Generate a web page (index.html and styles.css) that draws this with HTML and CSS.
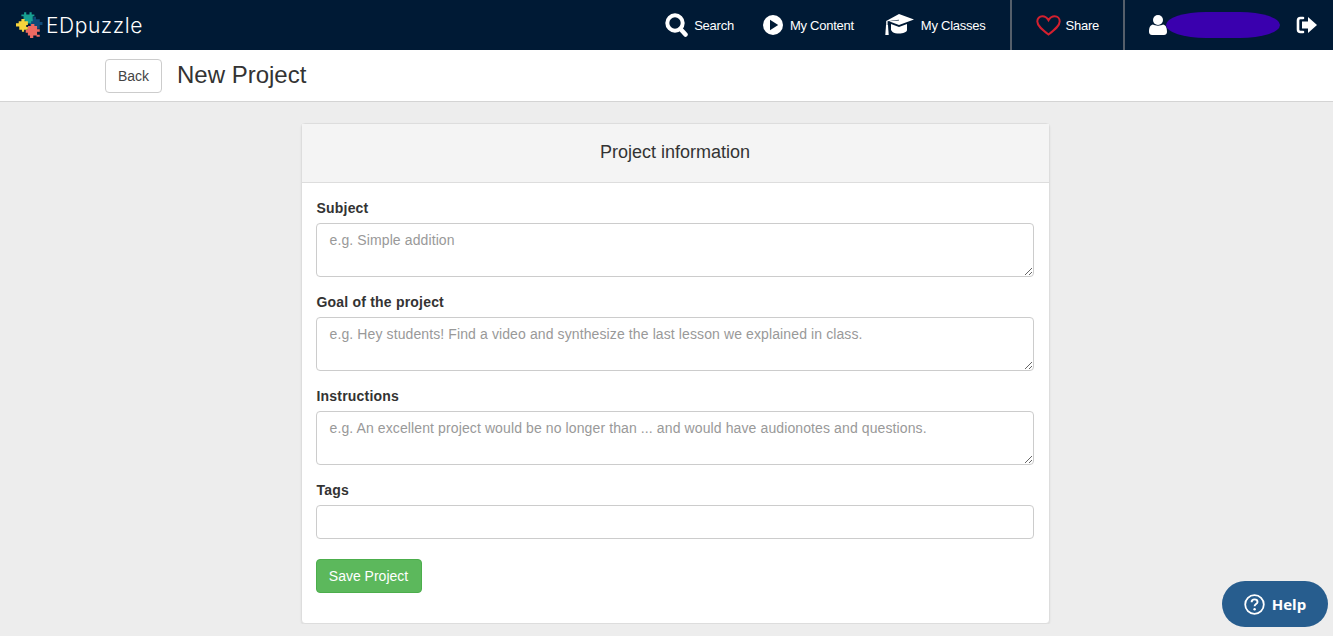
FILE: index.html
```html
<!DOCTYPE html>
<html lang="en">

<head>
    <meta charset="UTF-8">
    <meta name="viewport" content="width=device-width, initial-scale=1.0">
    <title>New Project</title>
    <link rel="stylesheet" href="styles.css">
</head>

<body>
    <nav class="topbar">
        <a class="brand" href="#">
            <svg class="brand-icon" width="27" height="26" viewBox="1 .5 25 27" preserveAspectRatio="none">
                <path fill="#0f4a78" d="M14 8h3V5.500h2.500V8H23v3h2.500v3H23v4h-3v2.500h-3V18h-3z"/>
                <path fill="#17a092" d="M8 5H6V3h2.500V.8h2V3h3V.8h2V3H18v2h-1.500v5H15v2.500H9.500V9H8z"/>
                <path fill="#f6d33c" d="M3.500 10H6V7.800h3V10h3v4h-1.500v2H12v3H8.500v2h-2v-2H4v-3.500H1v-3.200h2.500z"/>
                <path fill="#ef6a62" d="M12 15h3v-2h3v2h2.500v3.500H23v2.500h-2.500v3H23v2.200h-3V25h-3v2.500h-3V25h-2v-3h-2v-3h2z"/>
            </svg>
            <span class="brand-name">EDpuzzle</span>
        </a>

        <div class="nav-right">
            <a class="nav-link nav-search" href="#">
                <svg width="23" height="24" viewBox="0 0 23 24">
                    <circle cx="10" cy="10" r="7.700" fill="none" stroke="#fff" stroke-width="4"/>
                    <path d="M15.500 16l5 5.500" stroke="#fff" stroke-width="4.500" stroke-linecap="round"/>
                </svg>
                Search
            </a>
            <a class="nav-link" href="#">
                <svg width="20" height="20" viewBox="0 0 20 20">
                    <circle cx="10" cy="10" r="10" fill="#fff"/>
                    <path d="M7 4.800l8.200 5.200L7 15.200z" fill="#001a35"/>
                </svg>
                My Content
            </a>
            <a class="nav-link" href="#">
                <svg width="30" height="22" viewBox="0 0 30 22">
                    <path fill="#fff" d="M15 0L30 5.500 15 11 5 7.300 15 6.500 14.800 5.700 3.600 7.300 3.600 11 2.200 11 2.200 7z"/>
                    <path fill="#fff" d="M7 10l8 3 8-3v6c0 2-4 3.500-8 3.500-2.500 0-5-.5-6.500-1.500L7 16z"/>
                    <path fill="#fff" d="M2 11h2l.7 10H1.300z"/>
                </svg>
                My Classes
            </a>
            <div class="nav-section">
                <a class="nav-link" href="#">
                    <svg width="25" height="21" viewBox="0 0 25 21">
                        <path d="M12.500 19.500C6 14.500 1.300 10.800 1.300 6.500 1.300 3.500 3.500 1.300 6.300 1.300c2.700 0 4.800 1.500 6.200 4 1.400-2.500 3.500-4 6.200-4 2.800 0 5 2.200 5 5.200 0 4.300-4.700 8-11.200 13z" fill="none" stroke="#d3202f" stroke-width="2"/>
                    </svg>
                    Share
                </a>
            </div>
            <div class="nav-user">
                <svg width="18" height="20" viewBox="0 0 18 20">
                    <circle cx="9" cy="5" r="5" fill="#fff"/>
                    <path d="M0 17c0-5 1.500-7 4-7.500C6 11 12 11 14 9.500c2.500.5 4 2.500 4 7.500 0 2-1.500 3-3 3H3c-1.500 0-3-1-3-3z" fill="#fff"/>
                </svg>
                <span class="scribble"></span>
                <a class="logout" href="#">
                    <svg width="21" height="18" viewBox="0 0 21 18">
                        <path d="M7 2H4.500C2.800 2 2 3 2 4.500v9C2 15 2.800 16 4.500 16H7" fill="none" stroke="#fff" stroke-width="2.600" stroke-linecap="round"/>
                        <path d="M12 1l9 8-9 8v-4.500H6v-7h6z" fill="#fff"/>
                    </svg>
                </a>
            </div>
        </div>
    </nav>

    <header class="subbar">
        <button class="back-btn">Back</button>
        <h1 class="page-title">New Project</h1>
    </header>

    <main class="content">
        <form class="card">
            <h2 class="card-head">Project information</h2>
            <div class="card-body">
                <label class="field-label">Subject</label>
                <textarea class="field field-area" placeholder="e.g. Simple addition"></textarea>

                <label class="field-label">Goal of the project</label>
                <textarea class="field field-area" placeholder="e.g. Hey students! Find a video and synthesize the last lesson we explained in class."></textarea>

                <label class="field-label">Instructions</label>
                <textarea class="field field-area" placeholder="e.g. An excellent project would be no longer than ... and would have audionotes and questions."></textarea>

                <label class="field-label">Tags</label>
                <input type="text" class="field field-input">

                <button class="save-btn" type="button">Save Project</button>
            </div>
        </form>
    </main>

    <button class="help-btn">
        <svg width="21" height="21" viewBox="0 0 21 21">
            <circle cx="10.500" cy="10.500" r="9.300" fill="none" stroke="#fff" stroke-width="1.800"/>
            <path d="M7.600 8.200c0-1.800 1.300-2.800 3-2.800s2.900 1 2.900 2.500c0 2.200-2.900 2.200-2.900 4.300" fill="none" stroke="#fff" stroke-width="1.900"/>
            <circle cx="10.600" cy="15.200" r="1.200" fill="#fff"/>
        </svg>
        Help
    </button>
</body>

</html>
```

FILE: styles.css
```css
* {
    box-sizing: border-box;
}

body {
    margin: 0;
    background-color: #ededed;
    color: #333;
    font-family: "Liberation Sans", Arial, sans-serif;
    font-size: 14px;
}

a {
    color: inherit;
    text-decoration: none;
}

.topbar {
    display: flex;
    align-items: center;
    justify-content: space-between;
    height: 50px;
    background-color: #001a35;
    color: #fff;
}

.brand {
    display: flex;
    align-items: center;
    gap: 3px;
    padding-left: 16px;
}

.brand-name {
    font-family: Inter, sans-serif;
    font-size: 21px;
    font-weight: 300;
    letter-spacing: 0.55px;
}

.nav-right {
    display: flex;
    align-items: stretch;
    height: 50px;
}

.nav-link {
    display: flex;
    align-items: center;
    gap: 7px;
    margin-right: 30px;
    font-size: 13px;
    letter-spacing: -0.25px;
}

.nav-search {
    gap: 6px;
    margin-right: 29px;
}

.nav-section {
    display: flex;
    margin-left: -6px;
    padding: 0 24px;
    border-left: 2px solid #555f6b;
    border-right: 2px solid #555f6b;
}

.nav-section .nav-link {
    margin-right: 0;
    gap: 5px;
}

.nav-user {
    display: flex;
    align-items: center;
    padding: 0 16px 0 24px;
}

.scribble {
    width: 114px;
    height: 26px;
    margin-left: -1px;
    border-radius: 40px / 13px;
    background-color: #3a00ae;
}

.logout {
    display: flex;
    margin-left: 16px;
}

.subbar {
    display: flex;
    align-items: center;
    gap: 15px;
    height: 52px;
    padding: 1px 0 0 105px;
    background-color: #fff;
    border-bottom: 1px solid #d4d4d4;
}

.back-btn {
    width: 57px;
    height: 34px;
    padding: 0;
    border: 1px solid #ccc;
    border-radius: 4px;
    background-color: #fff;
    color: #444;
    font-family: inherit;
    font-size: 14px;
}

.page-title {
    margin: -2px 0 0;
    font-size: 24px;
    font-weight: 400;
}

.content {
    display: flex;
    justify-content: center;
    padding-top: 21px;
}

.card {
    width: 749px;
    height: 501px;
    margin-left: 17px;
    border: 1px solid #ddd;
    border-radius: 4px;
    background-color: #fff;
    box-shadow: 0 1px 2px rgba(0, 0, 0, 0.08);
}

.card-head {
    margin: 0;
    padding: 18px 0;
    height: 59px;
    border-bottom: 1px solid #ddd;
    background-color: #f4f4f4;
    font-size: 18px;
    font-weight: 400;
    line-height: 20px;
    text-align: center;
}

.card-body {
    display: flex;
    flex-direction: column;
    align-items: flex-start;
    padding: 17px 14px;
}

.field-label {
    height: 17px;
    margin: 0 0 6px 1px;
    font-size: 14px;
    font-weight: 700;
    letter-spacing: 0.2px;
    line-height: 17px;
}

.field {
    display: block;
    width: 718px;
    padding: 6px 12px 6px 13px;
    border: 1px solid #ccc;
    border-radius: 4px;
    background-color: #fff;
    color: #555;
    font-family: inherit;
    font-size: 14px;
    letter-spacing: 0.11px;
    line-height: 20px;
}

.field::placeholder {
    color: #999;
}

.field-area {
    height: 54px;
    margin-bottom: 17px;
}

.field-input {
    height: 34px;
}

.save-btn {
    width: 106px;
    height: 34px;
    margin-top: 20px;
    padding: 0;
    border: 1px solid #4cae4c;
    border-radius: 4px;
    background-color: #5cb85c;
    color: #fff;
    font-family: inherit;
    font-size: 14px;
}

.help-btn {
    position: fixed;
    right: 5px;
    bottom: 9px;
    display: flex;
    align-items: center;
    justify-content: center;
    gap: 7px;
    width: 106px;
    height: 46px;
    padding: 0;
    border: 0;
    border-radius: 23px;
    background-color: #275d8e;
    color: #fff;
    font-family: "Open Sans", sans-serif;
    font-size: 15px;
    font-weight: 700;
}
```
